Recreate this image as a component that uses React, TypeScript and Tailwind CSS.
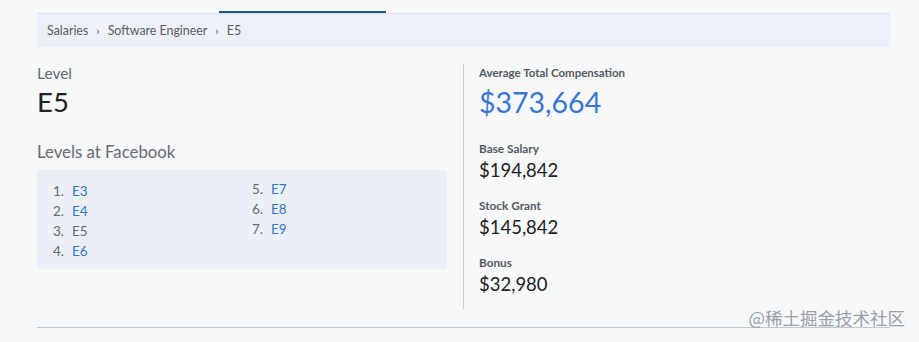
import React from 'react';

const levels = [
  { id: 'E3', current: false },
  { id: 'E4', current: false },
  { id: 'E5', current: true },
  { id: 'E6', current: false },
  { id: 'E7', current: false },
  { id: 'E8', current: false },
  { id: 'E9', current: false },
];

const breakdown = [
  { label: 'Base Salary', value: '$194,842' },
  { label: 'Stock Grant', value: '$145,842' },
  { label: 'Bonus', value: '$32,980' },
];

const LevelItem: React.FC<{ index: number; id: string; current: boolean }> = ({ index, id, current }) => (
  <li className="flex h-[20px] items-center text-[13.5px]">
    <span className="w-[19px] text-[#666b70]">{index}.</span>
    <span className={current ? 'text-[#666b70]' : 'text-[#3576cb]'}>{id}</span>
  </li>
);

export default function App() {
  const left = levels.slice(0, 4);
  const right = levels.slice(4);

  return (
    <div
      className="relative h-[342px] w-full overflow-hidden bg-[#f6f8fa] pl-[37px] pr-[29px] pt-[11px]"
      style={{ fontFamily: 'Lato, "Noto Sans", sans-serif' }}
    >
      <div className="ml-[182px] h-[2px] w-[167px] bg-[#1d5688]" />
      <nav className="flex h-[34px] items-center gap-[8px] border-t border-[#dce2e8] bg-[#edf1f7] px-[10px] pt-[2px] text-[12.4px] text-[#585d63]">
        <span>Salaries</span>
        <span className="mb-[2px] text-[12px]">›</span>
        <span>Software Engineer</span>
        <span className="mb-[2px] text-[12px]">›</span>
        <span>E5</span>
      </nav>

      <div className="flex pt-[17px]">
        <div className="w-[426px] pr-[16px]">
          <div className="h-[18px] text-[15.5px] leading-[18px] text-[#666b70]">Level</div>
          <div className="mt-[5px] h-[30px] text-[27.5px] leading-[30px] text-[#222]">E5</div>
          <div className="mt-[25px] h-[20px] text-[16.8px] leading-[20px] text-[#666b70]">Levels at Facebook</div>
          <div className="mt-[8px] grid h-[99px] grid-cols-[199px_1fr] rounded-[2px] bg-[#ebf0f7] pl-[16px] pt-[11px]">
            <ol>
              {left.map((l, i) => (
                <LevelItem key={l.id} index={i + 1} id={l.id} current={l.current} />
              ))}
            </ol>
            <ol className="-mt-[2px]">
              {right.map((l, i) => (
                <LevelItem key={l.id} index={i + 5} id={l.id} current={l.current} />
              ))}
            </ol>
          </div>
        </div>

        <div className="h-[245px] border-l border-[#c9ced3] pl-[15px] pt-[2px]">
          <div className="h-[14px] text-[11.5px] font-bold leading-[14px] text-[#555a60]">
            Average Total Compensation
          </div>
          <div className="mt-[6px] h-[32px] text-[28.5px] leading-[32px] text-[#3a74d4]">$373,664</div>
          {breakdown.map((b, i) => (
            <div key={b.label} className={i === 0 ? 'mt-[24px]' : 'mt-[18px]'}>
              <div className="h-[14px] text-[11.8px] font-bold leading-[14px] text-[#555a60]">{b.label}</div>
              <div className="mt-[3px] h-[22px] text-[18.5px] leading-[22px] text-[#222]">{b.value}</div>
            </div>
          ))}
        </div>
      </div>

      <div className="mt-[18px] h-px bg-[#c3c8cd]" />

      <div
        className="absolute right-[14px] top-[307px] text-[17.5px] leading-[22px] text-[#9aa0a6]"
        style={{ fontFamily: '"Noto Sans CJK SC", sans-serif' }}
      >
        @稀土掘金技术社区
      </div>
    </div>
  );
}
